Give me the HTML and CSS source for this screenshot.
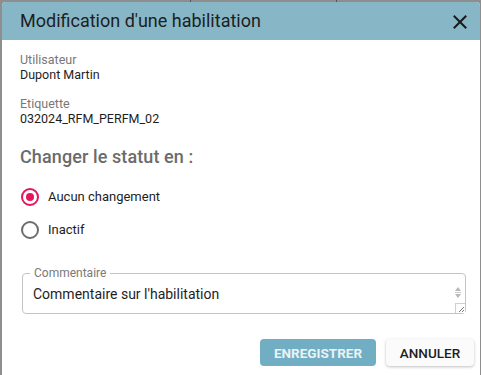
FILE: index.html
```html
<!DOCTYPE html>
<html lang="fr">
<head>
<meta charset="utf-8">
<link rel="stylesheet" href="styles.css">
</head>
<body>
<div class="backdrop">
  <span class="bgline l1"></span>
  <span class="bgline l2"></span>
  <div class="dialog">
    <div class="header">
      <span class="title">Modification d'une habilitation</span>
      <svg class="close" width="14" height="14" viewBox="0 0 14 14"><path d="M1.5 1.5 L12.5 12.5 M12.5 1.5 L1.5 12.5" stroke="#1a1a1a" stroke-width="2" stroke-linecap="square"/></svg>
    </div>
    <div class="content">
      <div class="field">
        <div class="label">Utilisateur</div>
        <div class="value">Dupont Martin</div>
      </div>
      <div class="field">
        <div class="label">Etiquette</div>
        <div class="value">032024_RFM_PERFM_02</div>
      </div>
      <div class="section">Changer le statut en :</div>
      <div class="radio">
        <span class="circle checked"><span class="dot"></span></span>
        <span class="rlabel">Aucun changement</span>
      </div>
      <div class="radio">
        <span class="circle"></span>
        <span class="rlabel">Inactif</span>
      </div>
      <fieldset class="comment">
        <legend>Commentaire</legend>
        <div class="ctext">Commentaire sur l'habilitation</div>
        <div class="spin"><span class="up"></span><span class="sep"></span><span class="down"></span></div>
        <svg class="grip" width="9" height="9" viewBox="0 0 9 9"><path d="M8 3 L3 8 M8 6 L6 8" stroke="#777" stroke-width="1"/></svg>
      </fieldset>
      <div class="actions">
        <button class="btn primary">ENREGISTRER</button>
        <button class="btn secondary">ANNULER</button>
      </div>
    </div>
  </div>
</div>
</body>
</html>
```
FILE: styles.css
```css
html, body {
  margin: 0;
  padding: 0;
  background: #8e8e8e;
  font-family: Roboto, "Liberation Sans", sans-serif;
}
.backdrop {
  position: relative;
  width: 481px;
  height: 375px;
  overflow: hidden;
  padding: 2px 1px 0 2px;
  box-sizing: border-box;
}
.bgline {
  position: absolute;
  top: 0;
  width: 1px;
  height: 2px;
  background: #555;
}
.l1 { left: 190px; }
.l2 { left: 336px; }
.dialog {
  background: #fff;
  border-radius: 4px 4px 0 0;
  height: 380px;
  overflow: hidden;
}
.header {
  background: #87b7c7;
  height: 38px;
  display: flex;
  align-items: center;
  justify-content: space-between;
  padding: 0 13px 0 18px;
}
.title {
  font-size: 18px;
  color: #1e1e1e;
  margin-top: -2px;
}
.close {
  display: block;
  margin-top: 1px;
}
.content {
  padding: 12px 15px 0 18px;
}
.field {
  margin-bottom: 14px;
}
.label {
  font-size: 12.5px;
  color: #777;
  line-height: 15px;
}
.value {
  font-size: 12.5px;
  color: #1e1e1e;
  line-height: 15px;
}
.section {
  font-size: 18px;
  font-weight: 500;
  color: #6b6b6b;
  margin-top: 20px;
  line-height: 22px;
  margin-bottom: 12px;
  letter-spacing: 0.1px;
}
.radio {
  display: flex;
  align-items: center;
  height: 33px;
}
.circle {
  width: 14px;
  height: 14px;
  border: 2px solid #6d6d6d;
  border-radius: 50%;
  margin-left: 1px;
  display: flex;
  align-items: center;
  justify-content: center;
}
.circle.checked {
  border-color: #e3165b;
}
.dot {
  width: 8px;
  height: 8px;
  border-radius: 50%;
  background: #e3165b;
}
.rlabel {
  font-size: 13px;
  color: #1e1e1e;
  margin-left: 9px;
}
.comment {
  position: relative;
  margin: 21px 0 0 2px;
  width: 444px;
  height: 47px;
  box-sizing: border-box;
  border: 1px solid #c4c4c4;
  border-radius: 4px;
  padding: 0 0 0 10px;
}
.comment legend {
  font-size: 12px;
  color: #7a7a7a;
  padding: 0 4px;
  margin-left: -3px;
  line-height: 12px;
}
.ctext {
  font-size: 14px;
  color: #1e1e1e;
  margin-top: 7px;
  line-height: 16px;
}
.spin {
  position: absolute;
  right: 4px;
  top: 8px;
  width: 6px;
  display: flex;
  flex-direction: column;
  align-items: center;
  gap: 1px;
}
.up {
  width: 0; height: 0;
  border-left: 3px solid transparent;
  border-right: 3px solid transparent;
  border-bottom: 4px solid #b8b8b8;
}
.down {
  width: 0; height: 0;
  border-left: 3px solid transparent;
  border-right: 3px solid transparent;
  border-top: 4px solid #b8b8b8;
}
.sep {
  width: 6px;
  height: 1px;
  background: #ccc;
}
.grip {
  position: absolute;
  right: 0;
  bottom: 0;
  border-left: 1px solid #d0d0d0;
  border-top: 1px solid #d0d0d0;
  background: #fff;
}
.actions {
  display: flex;
  justify-content: flex-end;
  gap: 10px;
  margin-top: 25px;
  margin-right: -9px;
}
.btn {
  font-family: Roboto, "Liberation Sans", sans-serif;
  font-size: 13.5px;
  font-weight: 500;
  height: 27px;
  border: none;
  border-radius: 4px;
  padding: 0 11px;
}
.primary {
  background: #72aec3;
  color: #e9f3f6;
  font-weight: 700;
  width: 116px;
}
.secondary {
  background: #fbfbfb;
  color: #1e1e1e;
  box-shadow: 0 1px 3px rgba(0,0,0,0.25);
  width: 88px;
}
```
